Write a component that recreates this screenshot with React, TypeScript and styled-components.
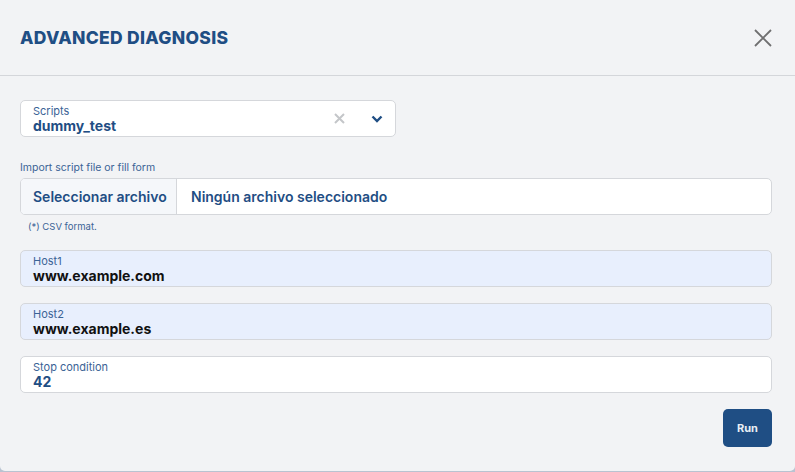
import React from 'react';
import styled, { createGlobalStyle } from 'styled-components';

const GlobalStyle = createGlobalStyle`
  html, body {
    margin: 0;
    padding: 0;
    background: #b9c3d1;
    font-family: Inter, "Noto Sans", sans-serif;
  }
  * { box-sizing: border-box; }
`;

const Modal = styled.div`
  width: 795px;
  height: 471px;
  background: #f2f3f5;
  border-radius: 0 0 5px 5px;
  display: flex;
  flex-direction: column;
`;

const Header = styled.div`
  height: 76px;
  padding: 0 20px;
  display: flex;
  align-items: center;
  justify-content: space-between;
  border-bottom: 1px solid #d4d6da;
`;

const Title = styled.h1`
  margin: 0;
  color: #1f4e84;
  font-size: 17.5px;
  font-weight: 800;
  letter-spacing: 0.3px;
`;

const CloseButton = styled.button`
  border: none;
  background: none;
  padding: 0;
  margin-right: 2px;
  width: 20px;
  height: 20px;
  display: flex;
  align-items: center;
  justify-content: center;
  cursor: pointer;
`;

const Body = styled.div`
  padding: 24px 23px 0 20px;
  display: flex;
  flex-direction: column;
`;

const Field = styled.div<{ $bg?: string; $width?: string }>`
  width: ${(p) => p.$width || '100%'};
  height: 37px;
  flex-shrink: 0;
  background: ${(p) => p.$bg || '#ffffff'};
  border: 1px solid #d5d7db;
  border-radius: 5px;
  padding: 1px 12px 0 12px;
  display: flex;
  flex-direction: column;
  justify-content: center;
  position: relative;
`;

const FieldLabel = styled.span`
  font-size: 11px;
  line-height: 12px;
  color: #3b6396;
`;

const FieldValue = styled.span<{ $color?: string }>`
  font-size: 14px;
  line-height: 17px;
  font-weight: 700;
  color: ${(p) => p.$color || '#1f4e84'};
`;

const SelectIcons = styled.div`
  position: absolute;
  right: 12px;
  top: 0;
  bottom: 0;
  display: flex;
  align-items: center;
  gap: 26px;
`;

const Hint = styled.div<{ $indent?: number; $size?: number }>`
  font-size: ${(p) => p.$size || 10.5}px;
  line-height: 13px;
  color: #3b6396;
  padding-left: ${(p) => p.$indent || 0}px;
`;

const FileInput = styled.div`
  height: 37px;
  flex-shrink: 0;
  background: #ffffff;
  border: 1px solid #d5d7db;
  border-radius: 5px;
  display: flex;
  align-items: stretch;
  overflow: hidden;
`;

const FileButton = styled.div`
  width: 156px;
  background: #f5f7fa;
  border-right: 1px solid #d5d7db;
  display: flex;
  align-items: center;
  padding-left: 12px;
  font-size: 14px;
  font-weight: 600;
  color: #1f4e84;
`;

const FileName = styled.div`
  display: flex;
  align-items: center;
  padding-left: 14px;
  font-size: 14px;
  font-weight: 600;
  color: #1f4e84;
`;

const Footer = styled.div`
  display: flex;
  justify-content: flex-end;
  margin-top: 16px;
`;

const RunButton = styled.button`
  width: 49px;
  height: 38px;
  border: none;
  border-radius: 5px;
  background: #1f4e84;
  color: #e9eef5;
  font-family: Inter, sans-serif;
  font-size: 11px;
  font-weight: 700;
  cursor: pointer;
`;

export default function App() {
  return (
    <>
      <GlobalStyle />
      <Modal>
        <Header>
          <Title>ADVANCED DIAGNOSIS</Title>
          <CloseButton aria-label="close">
            <svg width="18" height="18" viewBox="0 0 18 18">
              <path d="M1 1 L17 17 M17 1 L1 17" stroke="#6f6f70" strokeWidth="1.8" />
            </svg>
          </CloseButton>
        </Header>
        <Body>
          <Field $width="376px">
            <FieldLabel>Scripts</FieldLabel>
            <FieldValue>dummy_test</FieldValue>
            <SelectIcons>
              <svg width="11" height="11" viewBox="0 0 11 11">
                <path d="M1 1 L10 10 M10 1 L1 10" stroke="#c4c6c9" strokeWidth="2" />
              </svg>
              <svg width="12" height="8" viewBox="0 0 12 8">
                <path d="M1.5 1.5 L6 6 L10.5 1.5" stroke="#1f4e84" strokeWidth="2.4" fill="none" />
              </svg>
            </SelectIcons>
          </Field>
          <Hint style={{ marginTop: 24, marginBottom: 4 }}>Import script file or fill form</Hint>
          <FileInput>
            <FileButton>Seleccionar archivo</FileButton>
            <FileName>Ningún archivo seleccionado</FileName>
          </FileInput>
          <Hint $indent={8} $size={9.5} style={{ marginTop: 5 }}>(*) CSV format.</Hint>
          <Field $bg="#e8effd" style={{ marginTop: 17 }}>
            <FieldLabel>Host1</FieldLabel>
            <FieldValue $color="#111111">www.example.com</FieldValue>
          </Field>
          <Field $bg="#e8effd" style={{ marginTop: 16 }}>
            <FieldLabel>Host2</FieldLabel>
            <FieldValue $color="#111111">www.example.es</FieldValue>
          </Field>
          <Field style={{ marginTop: 16 }}>
            <FieldLabel>Stop condition</FieldLabel>
            <FieldValue>42</FieldValue>
          </Field>
          <Footer>
            <RunButton>Run</RunButton>
          </Footer>
        </Body>
      </Modal>
    </>
  );
}
